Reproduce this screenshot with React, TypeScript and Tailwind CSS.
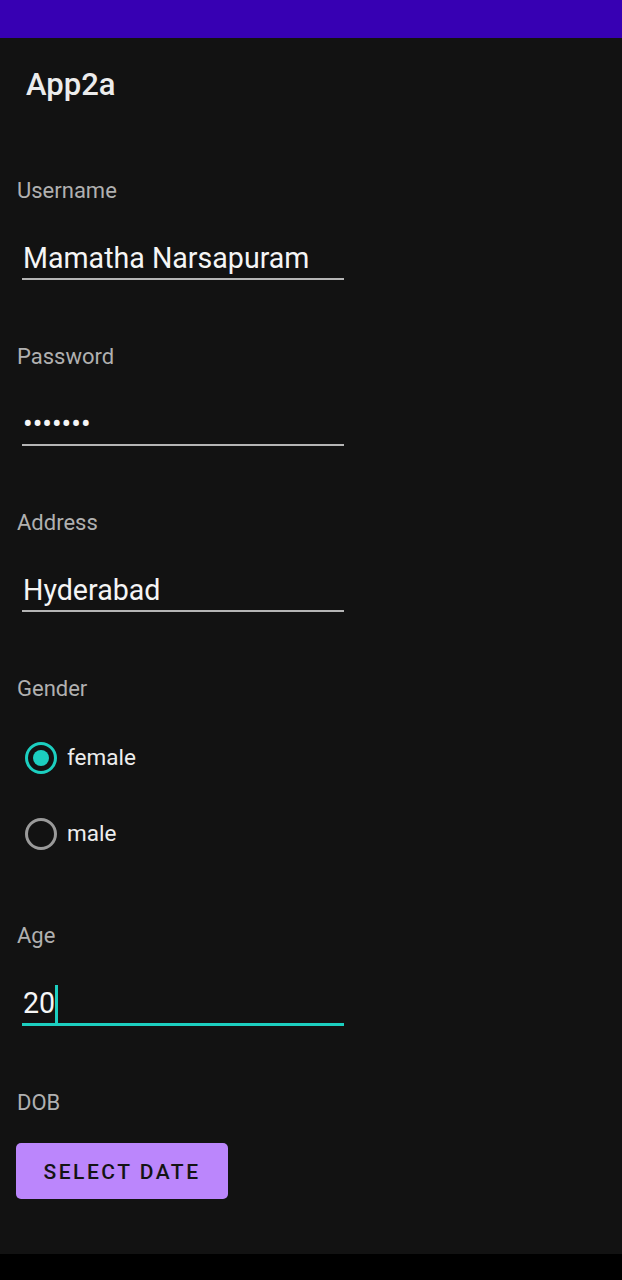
import React from "react";

const font = { fontFamily: "Roboto, 'Noto Sans', sans-serif" };

function Label({ text, mt }: { text: string; mt: string }) {
  return (
    <div className={`${mt} ml-[17px] h-[28px] leading-[28px] text-[22px] text-[#b0b0b0]`}>{text}</div>
  );
}

function Field({ value }: { value: string }) {
  return (
    <div className="mt-[35px] ml-[22px] w-[322px] h-[40px] border-b-2 border-[#b5b5b5]">
      <div className="pl-[1px] h-[37px] leading-[37px] text-[28.6px] text-[#f5f5f5]">{value}</div>
    </div>
  );
}

export default function App() {
  return (
    <div style={font} className="w-[622px] h-[1280px] flex flex-col bg-black">
      <div className="h-[38px] bg-[#3700b3]" />
      <div className="h-[1216px] bg-[#121212] flex flex-col">
        <div className="mt-[29px] ml-[26px] h-[36px] leading-[36px] text-[31px] font-medium text-[#ececec]">App2a</div>

        <Label text="Username" mt="mt-[74px]" />
        <Field value="Mamatha Narsapuram" />

        <Label text="Password" mt="mt-[63px]" />
        <Field value="•••••••" />

        <Label text="Address" mt="mt-[63px]" />
        <Field value="Hyderabad" />

        <Label text="Gender" mt="mt-[63px]" />
        <div className="mt-[31px] ml-[25px] h-[48px] flex items-center">
          <div className="w-[32px] h-[32px] rounded-full border-[3px] border-[#1ccfc0] flex items-center justify-center">
            <div className="w-[16px] h-[16px] rounded-full bg-[#1ccfc0]" />
          </div>
          <span className="ml-[10px] text-[22.5px] text-[#ededed]">female</span>
        </div>
        <div className="mt-[28px] ml-[25px] h-[48px] flex items-center">
          <div className="w-[32px] h-[32px] rounded-full border-[3px] border-[#9a9a9a]" />
          <span className="ml-[10px] text-[22.5px] text-[#ededed]">male</span>
        </div>

        <Label text="Age" mt="mt-[64px]" />
        <div className="mt-[35px] ml-[22px] w-[322px] h-[41px] border-b-[3px] border-[#1ccfc0]">
          <div className="pl-[1px] h-[37px] leading-[37px] text-[28.6px] text-[#f5f5f5] flex items-center">
            <span>20</span>
            <span className="inline-block w-[3px] h-[38px] bg-[#1ccfc0]" />
          </div>
        </div>

        <Label text="DOB" mt="mt-[63px]" />
        <div className="mt-[26px] ml-[16px] w-[212px] h-[56px] rounded-[5px] bg-[#bb86fc] flex items-center justify-center pt-[3px]">
          <span className="text-[21px] font-medium tracking-[2.5px] text-[#141414]">SELECT DATE</span>
        </div>
      </div>
      <div className="h-[26px] bg-black" />
    </div>
  );
}
